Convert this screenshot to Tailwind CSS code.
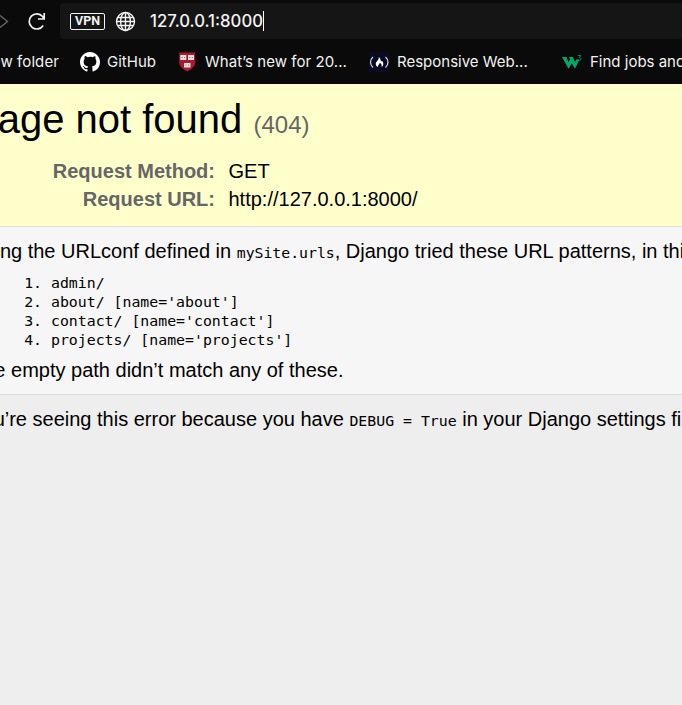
<!DOCTYPE html>
<html lang="en">
<head>
<meta charset="utf-8">
<title>Page not found at /</title>
<script src="https://cdn.jsdelivr.net/npm/@tailwindcss/browser@4"></script>
</head>
<body class="w-[682px] h-[705px] overflow-hidden bg-[#eeeeee] text-black font-['Liberation_Sans',Arial,sans-serif] text-[20px] leading-[24px]">
<header class="h-[84px] bg-[#0a0a0a] text-[#f2f2f2] font-['Inter',sans-serif] overflow-hidden pt-[3px]">
  <div class="flex h-9 items-center">
    <svg class="w-[10px] h-9 shrink-0" viewBox="0 0 10 36" fill="none" stroke="#6b6b6b" stroke-width="1.3"><path d="M0 12.5 7.5 18.5 0 24.5"/></svg>
    <svg class="ml-[17px] w-5 h-9 shrink-0" viewBox="0 0 20 36" fill="none" stroke="#f2f2f2" stroke-width="1.7"><path d="M16.2 22.5A7.6 7.6 0 1 1 15.6 13.5L17 15.5M17.2 10V16H11"/></svg>
    <div class="ml-[13px] flex h-9 flex-1 items-center rounded-l-[4px] bg-[#151515] pl-[10px]">
      <div class="flex h-[17px] w-[35px] items-center justify-center rounded-[2px] border border-[#f2f2f2] text-[12.5px] leading-none font-bold font-['Roboto',sans-serif]">VPN</div>
      <svg class="ml-[10px] size-[21px] shrink-0" viewBox="0 0 21 21" fill="none" stroke="#f2f2f2" stroke-width="1.4"><circle cx="10.5" cy="10.5" r="9"/><ellipse cx="10.5" cy="10.5" rx="4.9" ry="9"/><path d="M10.5 1.5v18M1.5 10.5h18M3 6.5h15M3 14.5h15"/></svg>
      <span class="ml-[14px] w-[113px] whitespace-nowrap text-[16.7px] leading-5 font-medium">127.0.0.1:8000</span>
      <span class="h-5 w-px bg-white"></span>
    </div>
  </div>
  <nav class="flex h-[45px] items-center whitespace-nowrap text-[15px] leading-5">
    <div class="flex w-[80px] shrink-0"><span class="-ml-[21px] w-[80px] text-right tracking-[0.1px]">New folder</span></div>
    <div class="flex w-[98px] shrink-0 items-center gap-[7px]">
      <svg class="size-5 shrink-0" viewBox="0 0 16 16" fill="#fff"><path d="M8 0C3.58 0 0 3.58 0 8c0 3.54 2.29 6.53 5.47 7.59.4.07.55-.17.55-.38 0-.19-.01-.82-.01-1.49-2.01.37-2.53-.49-2.69-.94-.09-.23-.48-.94-.82-1.13-.28-.15-.68-.52-.01-.53.63-.01 1.08.58 1.23.82.72 1.21 1.87.87 2.33.66.07-.52.28-.87.51-1.07-1.78-.2-3.64-.89-3.64-3.95 0-.87.31-1.59.82-2.15-.08-.2-.36-1.02.08-2.12 0 0 .67-.21 2.2.82A7.6 7.6 0 0 1 8 3.87c.68 0 1.36.09 2 .27 1.53-1.04 2.2-.82 2.2-.82.44 1.1.16 1.92.08 2.12.51.56.82 1.27.82 2.15 0 3.07-1.87 3.75-3.65 3.95.29.25.54.73.54 1.48 0 1.07-.01 1.93-.01 2.2 0 .21.15.46.55.38A8.01 8.01 0 0 0 16 8c0-4.42-3.58-8-8-8Z"/></svg>
      <span>GitHub</span>
    </div>
    <div class="flex w-[191px] shrink-0 items-center gap-[8px]">
      <svg class="w-[19px] h-5 shrink-0" viewBox="0 0 19 20"><path d="M1.2.5H17.2v9.7c0 4-3.2 6.500-8 9.300C4.500 16.700 1.200 14.200 1.200 10.200Z" fill="#ad1831"/><path d="M2.300 3h6v5h-6zM10 3h6v5h-6zM6 11h6.500v4.500H6z" fill="#e8e3df"/><path d="M3.500 5.500h1.200M6 5.500h1.200M11.200 5.500h1.200M13.700 5.500h1.200M7.400 13h1.200M10 13h1.200" stroke="#8b7476"/></svg>
      <span class="tracking-[0.05px]">What’s new for 20...</span>
    </div>
    <div class="flex w-[193px] shrink-0 items-center gap-[8px]">
      <svg class="size-5 shrink-0" viewBox="0 0 20 20"><path fill="#0a0a23" d="M0 0h20v20H0z"/><path d="M4 5C.7 7.800.7 12.700 4 15.500M16.500 5c3.300 2.800 3.300 7.700 0 10.500" fill="none" stroke="#d8d8e0" stroke-width="1.200"/><path d="M9.700 5c2.600 2 1.500 3.600 2.600 4.300.6.3 1-.4 1-.4 1.600 2.500 1.300 4.900-.7 6.200.4-1.900-.2-3.300-1.800-4.300-.1 1.400-2.300 2.200-1.800 4.300C6.200 13.600 6.200 10.900 8.200 9.100 9.500 7.700 10 6.400 9.700 5Z" fill="#fff"/></svg>
      <span>Responsive Web...</span>
    </div>
    <div class="flex shrink-0 items-center gap-[8px]">
      <svg class="size-5 shrink-0" viewBox="0 0 20 20"><path d="M0 5h4.500l2 5 1.500-2.600L7 5h4l2 5 1-2.500h3.500L13 16.800 9.800 11.500 6.500 16.800Z" fill="#04a46b"/><path d="M15.800 3.500h3L17.400 5.500C19.500 5.500 19.400 8.500 17.300 8.500 16.400 8.500 15.800 8 15.800 7.500" fill="none" stroke="#048c5c" stroke-width="1"/></svg>
      <span>Find jobs and</span>
    </div>
  </nav>
</header>
<main class="whitespace-nowrap">
  <section class="h-[143px] border-b border-[#dddddd] bg-[#ffffcc] pt-[11px]">
    <h1 class="-ml-[29px] text-[40px] leading-[48px]">Page not found <span class="text-[24px] text-[#666666]">(404)</span></h1>
    <dl class="mt-[8px] grid grid-cols-[215px_1fr] gap-x-[13.5px] leading-[28px]">
      <dt class="text-right font-bold text-[#666666]">Request Method:</dt><dd>GET</dd>
      <dt class="text-right font-bold text-[#666666]">Request URL:</dt><dd>http://127.0.0.1:8000/</dd>
    </dl>
  </section>
  <section class="h-[168px] border-b border-[#dddddd] bg-[#f6f6f6] pt-[12px]">
    <p class="-ml-[29px]">Using the URLconf defined in <code class="font-['DejaVu_Sans_Mono',monospace] text-[14.8px]">mySite.urls</code>, Django tried these URL patterns, in this order:</p>
    <ol class="mt-[9px] ml-[51px] list-decimal font-['DejaVu_Sans_Mono',monospace] text-[14.85px] leading-[19px]">
      <li>admin/</li>
      <li>about/ [name='about']</li>
      <li>contact/ [name='contact']</li>
      <li>projects/ [name='projects']</li>
    </ol>
    <p class="-ml-[29px] mt-[8px]">The empty path didn’t match any of these.</p>
  </section>
  <section class="pt-[12px]">
    <p class="-ml-[29px]">You’re seeing this error because you have <code class="font-['DejaVu_Sans_Mono',monospace] text-[14.85px]">DEBUG = True</code> in your Django settings file.</p>
  </section>
</main>
</body>
</html>
